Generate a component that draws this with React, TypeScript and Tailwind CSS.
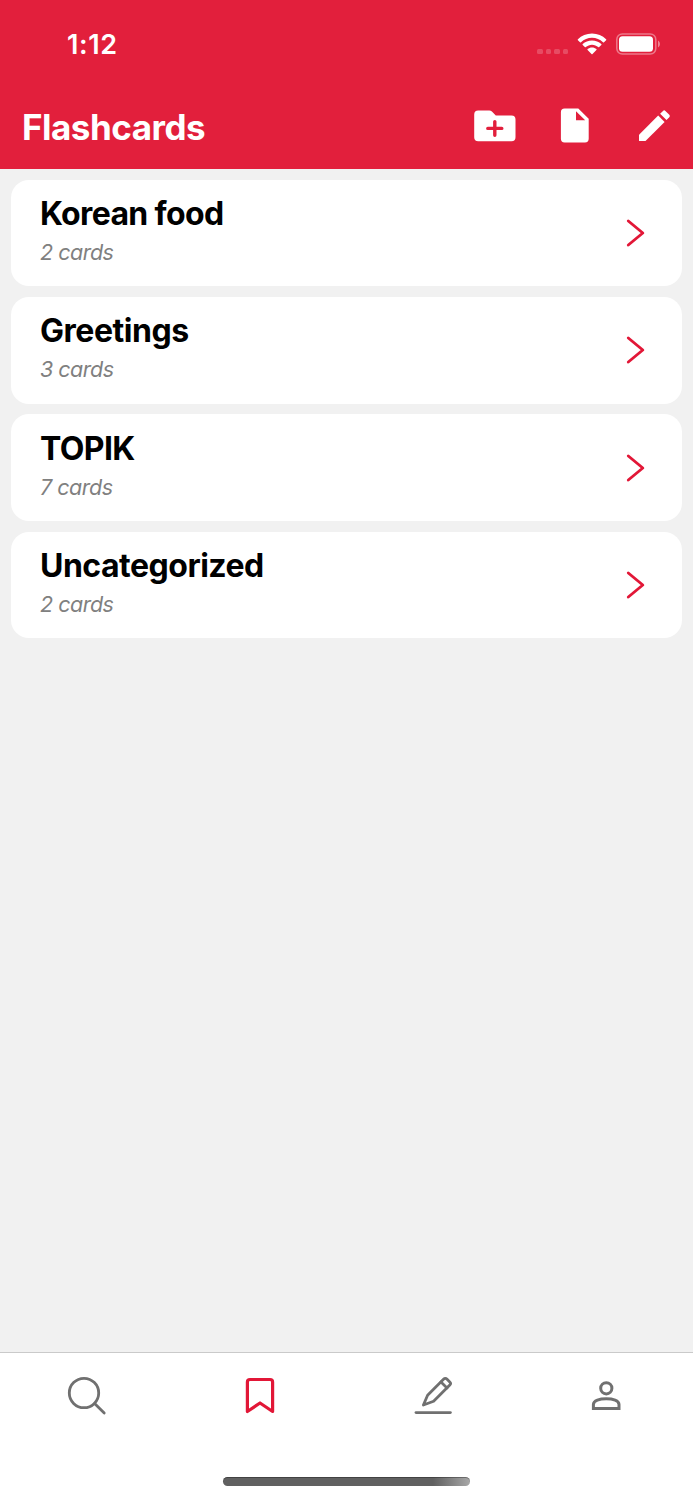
import React from "react";

const decks = [
  { name: "Korean food", count: 2, tracking: "tracking-[-0.650px]" },
  { name: "Greetings", count: 3, tracking: "tracking-[-0.450px]" },
  { name: "TOPIK", count: 7, tracking: "tracking-[-0.600px]" },
  { name: "Uncategorized", count: 2, tracking: "tracking-[-0.500px]" },
];

function StatusBar() {
  return (
    <div className="flex h-[84px] items-center justify-between pt-[5px] pr-[32px] pl-[67px]">
      <span className="text-[27px] leading-8 font-semibold tracking-[0.6px]">1:12</span>
      <div className="flex items-center gap-[9px] pb-[2px]">
        {/* No signal */}
        <div className="flex gap-[3px] pt-[15px]">
          <span className="h-[5px] w-[5.5px] rounded-[1.5px] bg-white/20" />
          <span className="h-[5px] w-[5.5px] rounded-[1.5px] bg-white/20" />
          <span className="h-[5px] w-[5.5px] rounded-[1.5px] bg-white/20" />
          <span className="h-[5px] w-[5.5px] rounded-[1.5px] bg-white/20" />
        </div>
        <svg className="h-[22px] w-[30px]" viewBox="0 0 30 22" fill="currentColor">
          <path d="M15 0.5C20.500 0.500 25.500 2.700 29.100 6.200Q29.600 6.700 29.100 7.200L27 9.200Q26.500 9.700 26 9.200C23 6.400 19.200 4.800 15 4.800S7 6.400 4 9.200Q3.500 9.700 3 9.200L0.900 7.200Q0.400 6.700 0.900 6.200C4.500 2.700 9.500 0.500 15 0.500Z" />
          <path d="M15 7.500C18.600 7.500 21.900 8.900 24.300 11.100Q24.800 11.600 24.300 12.100L22.200 14.100Q21.700 14.600 21.200 14.100C19.500 12.600 17.400 11.700 15 11.700S10.500 12.600 8.800 14.100Q8.300 14.600 7.800 14.100L5.700 12.100Q5.200 11.600 5.700 11.100C8.100 8.900 11.400 7.500 15 7.500Z" />
          <path d="M15 14.500C16.700 14.500 18.200 15.100 19.400 16.100Q19.900 16.600 19.400 17.100L15.500 20.900Q15 21.400 14.500 20.900L10.600 17.100Q10.100 16.600 10.600 16.100C11.800 15.100 13.300 14.500 15 14.500Z" />
        </svg>
        <svg className="h-[22px] w-[45px]" viewBox="0 0 45 22">
          <rect x="0.800" y="0.900" width="39" height="20.200" rx="5.500" fill="none" stroke="white" strokeOpacity="0.4" strokeWidth="1.500" />
          <rect x="3" y="3.200" width="34" height="15.600" rx="3.500" fill="white" />
          <path d="M42 7.500C44.600 9 44.600 13 42 14.500Z" fill="white" fillOpacity="0.450" />
        </svg>
      </div>
    </div>
  );
}

function Header() {
  return (
    <header className="h-[168.700px] bg-[#e21f3c] text-white">
      <StatusBar />
      <div className="flex h-[84px] items-center justify-between pr-[22px] pl-[22px]">
        <h1 className="pt-[2px] text-[35px] leading-[44px] font-bold tracking-[-0.500px]">Flashcards</h1>
        <div className="flex items-center">
          <svg className="mr-[44px] h-[36px] w-[42px]" viewBox="474 108 42 36">
            <path
              fill="currentColor"
              d="M478.200 110.500H489.300Q490.800 110.500 491.900 111.600L495.800 115.500H511.500Q515.500 115.500 515.500 119.500V137.200Q515.500 141.200 511.500 141.200H478.200Q474.200 141.200 474.200 137.200V114.500Q474.200 110.500 478.200 110.500Z"
            />
            <path d="M494.800 121.600V135.200M487.800 128.400H501.800" stroke="#e21f3c" strokeWidth="3.400" strokeLinecap="round" />
          </svg>
          <svg className="mr-[49px] h-[36px] w-[30px]" viewBox="560 108 30 36" fill="currentColor">
            <path
              fillRule="evenodd"
              d="M564.600 108.500H578.300L588.700 118.800V138.800Q588.700 142.500 585 142.500H564.600Q560.900 142.500 560.900 138.800V112.200Q560.900 108.500 564.600 108.500ZM576 111.300V120.300H585.200Z"
            />
          </svg>
          <svg className="h-[36px] w-[32px]" viewBox="639 108 32 36" fill="currentColor">
            <path d="M639 134.800L658.200 115.600L664.600 122L645.500 141.100H639.400Q639 141.100 639 140.700Z" />
            <path d="M660.100 113.700L663 110.900Q664.200 109.700 665.400 110.900L669.300 114.800Q670.500 116 669.300 117.200L666.500 120.100Z" />
          </svg>
        </div>
      </div>
    </header>
  );
}

function DeckList() {
  return (
    <main className="flex flex-1 flex-col gap-[10.700px] px-[11px] pt-[11px]">
      {decks.map((deck) => (
        <button
          key={deck.name}
          className="flex h-[106.600px] shrink-0 items-center justify-between rounded-[18px] bg-white pr-[35px] pl-[29px] text-left"
        >
          <div>
            <h2 className={`text-[32px] leading-[40px] font-bold text-black ${deck.tracking}`}>{deck.name}</h2>
            <p className="pt-[4px] pb-[6px] text-[21.5px] leading-[28px] tracking-[-0.500px] text-[#808080] italic">{deck.count} cards</p>
          </div>
          <svg className="h-[30px] w-[22px]" viewBox="0 0 22 30" fill="none">
            <path d="M3.300 3L17.800 15L3.300 27" stroke="#e21737" strokeWidth="2.900" strokeLinecap="round" strokeLinejoin="round" />
          </svg>
        </button>
      ))}
    </main>
  );
}

function TabBar() {
  return (
    <nav className="flex h-[148px] flex-col items-center justify-between border-t border-[#cacaca] bg-white pb-[14px]">
      <div className="grid h-[83px] w-full grid-cols-4 place-items-center text-[#707070]">
        <svg className="h-[44px] w-[44px]" viewBox="65 1373 44 44" fill="none" stroke="currentColor" strokeWidth="2.800" strokeLinecap="round">
          <circle cx="84" cy="1393" r="14.700" />
          <path d="M94.600 1403.600L104.200 1413" />
        </svg>
        <svg className="h-[44px] w-[44px]" viewBox="238 1373 44 44" fill="none" stroke="#e21737" strokeWidth="3.200" strokeLinejoin="round">
          <path d="M250 1379.500H270Q272.600 1379.500 272.600 1382.100V1411.500L260 1403L247.400 1411.500V1382.100Q247.400 1379.500 250 1379.500Z" />
        </svg>
        <svg className="h-[44px] w-[44px]" viewBox="411 1373 44 44" fill="none" stroke="currentColor" strokeWidth="2.800" strokeLinecap="round" strokeLinejoin="round">
          <path d="M416 1412.600H450.400" />
          <path d="M423.400 1405L427.600 1395.200L443.500 1379.300Q445.300 1377.500 447.100 1379.300L450 1382.200Q451.300 1383.500 449.800 1385L433.600 1401.200Z" />
          <path d="M441 1382L447 1388" />
        </svg>
        <svg className="h-[44px] w-[44px]" viewBox="584.300 1373 44 44" fill="none" stroke="currentColor" strokeWidth="3">
          <circle cx="606.600" cy="1388.300" r="5.600" />
          <path d="M593.700 1408.500V1404.500C593.700 1400.600 600 1398.800 606.600 1398.800S619.300 1400.600 619.300 1404.500V1408.500Z" />
        </svg>
      </div>
      {/* Home indicator */}
      <div className="h-[9px] w-[247px] rounded-full bg-linear-to-r from-[#606060] from-85% to-[#a8a8a8] shadow-[inset_0_1px_0_#00000050]" />
    </nav>
  );
}

export default function App() {
  return (
    <div className="flex h-[1500px] w-[693px] flex-col overflow-hidden bg-[#f1f1f1] font-['Inter','Liberation_Sans',sans-serif]">
      <Header />
      <DeckList />
      <TabBar />
    </div>
  );
}
